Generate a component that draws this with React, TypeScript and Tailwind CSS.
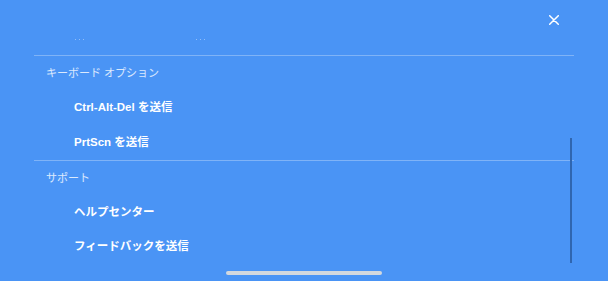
import React from "react";

const font = { fontFamily: '"Liberation Sans", "Noto Sans CJK JP", sans-serif' };

function Header({ children }: { children: React.ReactNode }) {
  return (
    <div className="h-[34.5px] flex items-center pl-[12px] text-[11px] text-white/80" style={font}>
      {children}
    </div>
  );
}

function Item({ children }: { children: React.ReactNode }) {
  return (
    <div className="h-[34.5px] flex items-center pl-[40px] text-[11.5px] font-bold text-white" style={font}>
      {children}
    </div>
  );
}

export default function App() {
  return (
    <div className="relative w-[608px] h-[281px] overflow-hidden bg-[#4a94f5]">
      <div className="px-[34px]">
        <div className="h-[32px] flex justify-end items-start pt-[15px] pr-[15px]">
          <svg width="10" height="10" viewBox="0 0 10 10">
            <path d="M0.7 0.7 L9.3 9.3 M9.3 0.7 L0.7 9.3" stroke="white" strokeWidth="1.5" strokeLinecap="round" />
          </svg>
        </div>
        <div className="h-[23px] flex items-end pb-[15px] gap-[112px] pl-[41px]">
          <div className="flex gap-[3px] opacity-40">
            <span className="w-[1px] h-[1px] bg-white" />
            <span className="w-[1px] h-[1px] bg-white" />
            <span className="w-[1px] h-[1px] bg-white" />
          </div>
          <div className="flex gap-[3px] opacity-40">
            <span className="w-[1px] h-[1px] bg-white" />
            <span className="w-[1px] h-[1px] bg-white" />
            <span className="w-[1px] h-[1px] bg-white" />
          </div>
        </div>
        <div className="h-px bg-[#7fb3f7]" />
        <Header>キーボード オプション</Header>
        <Item>Ctrl-Alt-Del を送信</Item>
        <Item>PrtScn を送信</Item>
        <div className="h-px bg-[#7fb3f7]" />
        <Header>サポート</Header>
        <Item>ヘルプセンター</Item>
        <Item>フィードバックを送信</Item>
      </div>
      <div className="absolute left-[570px] top-[138px] w-[2px] h-[125px] bg-[#2f66b0]" />
      <div className="absolute left-[226px] top-[271px] w-[156px] h-[4px] rounded-full bg-[#d3d8de]" />
    </div>
  );
}
